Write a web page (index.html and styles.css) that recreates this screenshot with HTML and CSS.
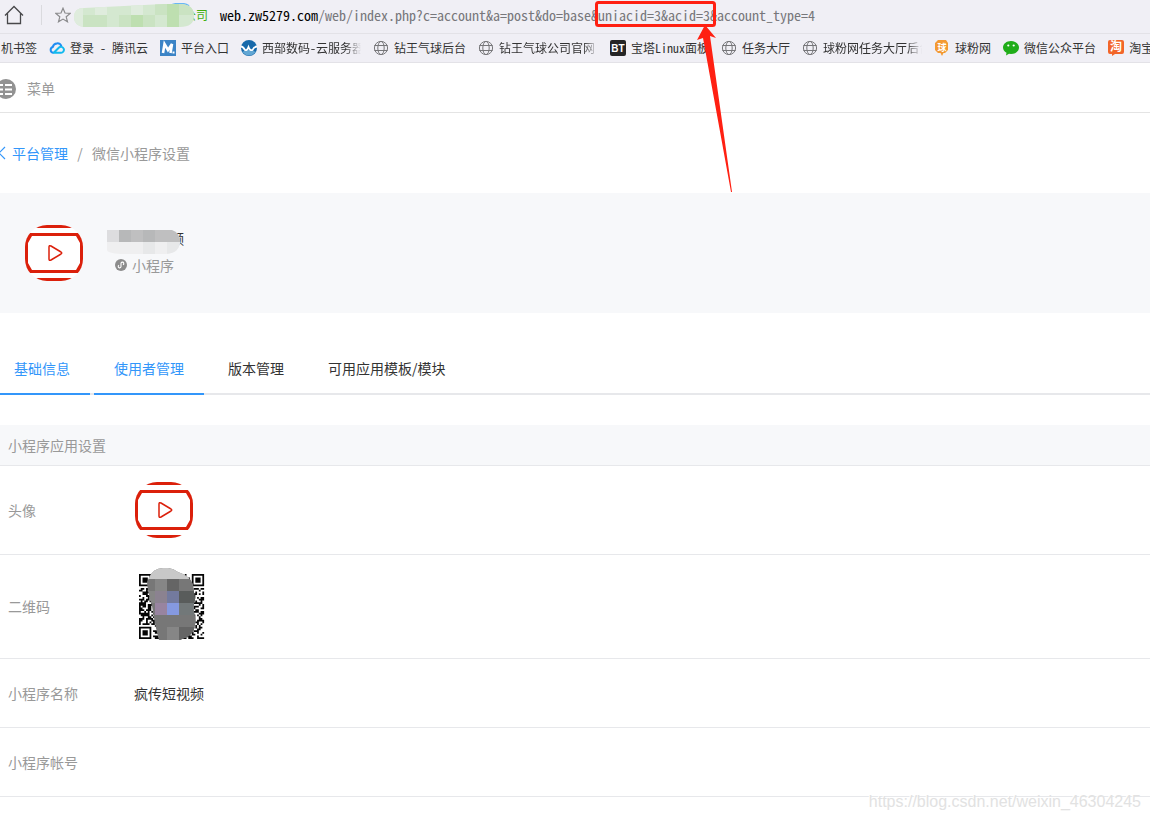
FILE: index.html
```html
<!DOCTYPE html>
<html lang="zh-CN">
<head>
<meta charset="utf-8">
<title>微信小程序设置</title>
<link rel="stylesheet" href="styles.css">
</head>
<body>
<svg class="defs" aria-hidden="true">
  <symbol id="globe" viewBox="0 0 16 16">
    <g fill="none" stroke="#77777a" stroke-width="1">
      <circle cx="8" cy="8" r="6.6"/><ellipse cx="8" cy="8" rx="3.2" ry="6.6"/>
      <path d="M1.400 5.500h13.200M1.400 10.500h13.200"/>
    </g>
  </symbol>
  <symbol id="logo" viewBox="0 0 58 56">
    <clipPath id="logo-clip"><rect width="58" height="56" rx="22"/></clipPath>
    <g clip-path="url(#logo-clip)">
      <path fill="#fff" d="M0 0h58v56H0z"/>
      <path fill="#db200b" d="M0 0h58v3H0zM0 53h58v3H0z"/>
      <path fill="#db200b" fill-rule="evenodd" d="M0 8h58v40H0zM7 11L3 18v20l4 7h44l4-7V18l-4-7z"/>
    </g>
    <path fill="none" stroke="#db200b" stroke-width="1.5" stroke-linejoin="round" d="M24 22q0-2 2-1l10 6q1.500 1 0 2l-10 6q-2 1-2-1z"/>
  </symbol>
</svg>

<header class="browser">
  <div class="address">
    <button class="icon-button home" aria-label="主页">
      <svg width="20" height="20" viewBox="0 0 20 20"><path fill="none" stroke="#48484a" stroke-width="1.300" d="M1 10.500L10 1.500l9 9M3.500 8.500v10h13v-10"/></svg>
    </button>
    <button class="icon-button star" aria-label="收藏">
      <svg width="16" height="16" viewBox="0 0 16 16"><path fill="none" stroke="#8a8a8c" stroke-width="1.200" d="M8 1.200l2 4.800 5.200.4-4 3.400 1.300 5L8 12.100l-4.500 2.700 1.300-5-4-3.400L6 6z"/></svg>
    </button>
    <div class="site">
      <span>公司</span>
      <svg class="site-cover" width="120" height="26" viewBox="0 0 120 26">
        <clipPath id="site-clip"><path d="M10 5Q50 3 90 1h18q12 1 12 12t-14 11H10Q0 23 0 14T10 5z"/></clipPath>
        <path d="M96 3q10-5 19 0" fill="none" stroke="#69b7f5" stroke-width="2"/>
        <g clip-path="url(#site-clip)">
          <path fill="#d4e8d0" d="M0 0h120v26H0z"/>
          <path fill="#dfecdd" d="M0 0h9v26H0zM21 0h12v12H21zM57 0h12v12H57z"/>
          <path fill="#cae3c2" d="M9 12h24v14H9zM45 12h12v14H45zM69 12h12v14H69zM81 0h12v12H81zM105 0h15v12h-15z"/>
          <path fill="#bedfb0" d="M57 12h12v14H57zM93 0h12v26H93z"/>
        </g>
      </svg>
    </div>
    <div class="url"><strong>web.zw5279.com</strong>/web/index.php?c=account&amp;a=post&amp;do=base&amp;uniacid=3&amp;acid=3&amp;account_type=4</div>
  </div>
  <nav class="bookmarks" aria-label="书签">
    <a href="#"><span>机书签</span></a>
    <a href="#"><svg viewBox="0 0 16 16"><path fill="none" stroke="#1f8df2" stroke-width="2" d="M4.500 12.800H4A3 3 0 0 1 3.800 7 4.500 4.500 0 0 1 12.500 6.500"/><path fill="none" stroke="#12b9ee" stroke-width="2" d="M4 12.800h8a3 3 0 1 0-2-5.300L5 12.500"/></svg><span>登录 - 腾讯云</span></a>
    <a href="#"><svg viewBox="0 0 16 16"><path fill="#3c84c6" d="M0 0h16v16H0z"/><path fill="none" stroke="#fff" stroke-width="2.600" d="M3 13L4.500 4 8 10l4-6-1.500 9"/><path fill="#fff" d="M12.500 11.500h2v2h-2z"/></svg><span>平台入口</span></a>
    <a href="#"><svg viewBox="0 0 16 16"><circle cx="8" cy="8" r="8" fill="#1769aa"/><path fill="#62a7d4" d="M1 12q7-4 14 0-7 7-14 0z"/><path fill="none" stroke="#fff" stroke-width="1.800" d="M0 6.500q2 0 4 3.500 2 1 3.500-3Q9 11 11.500 10 13 6.500 16 6.500"/></svg><span class="fade">西部数码-云服务器</span></a>
    <a href="#"><svg><use href="#globe"/></svg><span>钻王气球后台</span></a>
    <a href="#"><svg><use href="#globe"/></svg><span class="fade">钻王气球公司官网</span></a>
    <a href="#"><svg viewBox="0 0 16 16"><rect width="16" height="16" rx="2" fill="#252525"/><text x="8" y="12" class="bt">BT</text></svg><span>宝塔Linux面板</span></a>
    <a href="#"><svg><use href="#globe"/></svg><span>任务大厅</span></a>
    <a href="#"><svg><use href="#globe"/></svg><span class="fade">球粉网任务大厅后台</span></a>
    <a href="#"><svg viewBox="0 0 16 16"><path fill="#f39a32" d="M4 0h8l2 3v7l-3 3H9.500L8 16l-1.500-3H4l-3-3V3z"/><text x="8" y="11" class="tile">球</text></svg><span>球粉网</span></a>
    <a href="#"><svg viewBox="0 0 16 16"><path fill="#20ad19" d="M8 1c4.500 0 8 2.900 8 6.500S12.500 14 8 14l-2-.2L3 15.500l.5-2.700C1.300 11.600 0 9.700 0 7.500 0 3.900 3.500 1 8 1z"/><circle cx="5.300" cy="5.500" r="1.100" fill="#fff"/><circle cx="10.700" cy="5.500" r="1.100" fill="#fff"/></svg><span>微信公众平台</span></a>
    <a href="#"><svg viewBox="0 0 16 16"><path fill="#f26529" d="M2 0h12q2 0 2 2v10q0 2-2 2H7l-3 2v-2H2q-2 0-2-2V2q0-2 2-2z"/><text x="8" y="11" class="tile large">淘</text></svg><span>淘宝</span></a>
  </nav>
  <svg class="annotation" width="140" height="194" viewBox="0 0 140 194" aria-hidden="true">
    <rect x="6.500" y="2.500" width="118" height="23" rx="2" fill="none" stroke="#ff2012" stroke-width="3"/>
    <path fill="#ff2012" d="M115 25l-8 15 6-2 28 154h1L120 36l6 2z"/>
  </svg>
</header>

<div class="menu-bar">
  <button class="menu-button">
    <svg width="20" height="22" viewBox="0 0 20 22"><circle cx="10" cy="12" r="10" fill="#929292"/><path stroke="#fff" stroke-width="2" d="M4 8h3M9 8h7M4 12.500h3M9 12.500h7M4 17h3M9 17h7"/></svg>
    <span>菜单</span>
  </button>
</div>

<main>
  <nav class="breadcrumb" aria-label="路径">
    <a href="#"><svg width="8" height="14" viewBox="0 0 8 14"><path fill="none" stroke="#3296fa" stroke-width="1.200" d="M7 1L1 7l6 6"/></svg>平台管理</a>
    <span class="slash">/</span>
    <span>微信小程序设置</span>
  </nav>

  <section class="account">
    <svg class="logo"><use href="#logo"/></svg>
    <div class="account-text">
      <div class="account-name">
        <span>疯传短视频</span>
        <svg class="name-cover" width="73" height="24" viewBox="0 0 73 24">
          <clipPath id="name-clip"><path d="M0 0h65q8 3 8 11 0 12-14 13H14Q0 23 0 20z"/></clipPath>
          <g clip-path="url(#name-clip)">
            <path fill="#bfbfc0" d="M0 0h73v12H0z"/><path fill="#dddddf" d="M0 0h12v12H0z"/>
            <path fill="#b7b8b9" d="M12 0h12v12H12zM36 0h12v12H36z"/>
            <path fill="#efeff0" d="M0 12h73v12H0z"/><path fill="#e7e8e9" d="M36 12h12v12H36zM60 12h13v12H60z"/>
          </g>
        </svg>
      </div>
      <div class="account-type">
        <svg width="12" height="12" viewBox="0 0 12 12"><circle cx="6" cy="6" r="6" fill="#8c8c8c"/><path fill="none" stroke="#fff" stroke-width="1.100" d="M4 6.200a1.400 1.400 0 1 0 2 1.300v-3a1.400 1.400 0 1 1 2 1.300"/></svg>
        <span>小程序</span>
      </div>
    </div>
  </section>

  <nav class="tabs" aria-label="设置">
    <a href="#" class="active">基础信息</a>
    <a href="#" class="active">使用者管理</a>
    <a href="#">版本管理</a>
    <a href="#">可用应用模板/模块</a>
  </nav>

  <section class="settings">
    <h2>小程序应用设置</h2>
    <dl>
      <div class="row avatar"><dt>头像</dt><dd><svg class="logo"><use href="#logo"/></svg></dd></div>
      <div class="row code"><dt>二维码</dt><dd>
        <svg class="qr" width="66" height="72" viewBox="0 0 66 72" role="img" aria-label="二维码">
          <g transform="translate(0 6) scale(1.760)"><path id="qr-modules" fill="#050505"/></g>
          <clipPath id="qr-clip"><path d="M10 10Q14 0 24 0q8-1 15 4 12 4 15 12l2 16q-3 8 0 16 2 14-6 20l-9 4H20q-4-14-7-34Q8 20 8 14z"/></clipPath>
          <g clip-path="url(#qr-clip)">
            <path fill="#777" d="M0 0h66v72H0z"/>
            <path fill="#c8c8c8" d="M0 0h66v11H0z"/>
            <path fill="#868686" d="M16 11h12v12H16zM28 59h12v13H28zM4 23h12v12H4z"/>
            <path fill="#656565" d="M28 11h12v12H28zM40 59h26v13H40z"/>
            <path fill="#595c5b" d="M40 23h26v12H40z"/>
            <path fill="#8b8290" d="M16 23h12v12H16z"/>
            <path fill="#737a9e" d="M28 23h12v12H28z"/>
            <path fill="#9884a0" d="M16 35h12v12H16z"/>
            <path fill="#8599e0" d="M28 35h12v12H28z"/>
            <path fill="#727879" d="M40 35h26v12H40z"/>
          </g>
        </svg>
      </dd></div>
      <div class="row"><dt>小程序名称</dt><dd>疯传短视频</dd></div>
      <div class="row"><dt>小程序帐号</dt><dd></dd></div>
    </dl>
  </section>
</main>
<div class="watermark">https://blog.csdn.net/weixin_46304245</div>
<script src="qr.js"></script>
</body>
</html>
```
FILE: styles.css
```css
* { box-sizing: border-box; }

body {
  margin: 0;
  background: #fff;
  color: #333;
  font: 14px/20px "Noto Sans CJK SC", sans-serif;
  overflow-x: hidden;
}

a { color: inherit; text-decoration: none; }
button { border: 0; padding: 0; background: none; font: inherit; color: inherit; }
svg { display: block; flex: none; }
.defs { position: absolute; width: 0; height: 0; }

.browser {
  position: relative;
  background: #f0eff5;
  font-family: "Noto Sans Mono CJK SC", "Noto Sans CJK SC", monospace;
}

.address {
  display: flex;
  align-items: center;
  height: 34px;
  padding-bottom: 4px;
  border-bottom: 1px solid #e3e2e7;
}
.home { padding: 0 17px 0 4px; border-right: 1px solid #dadade; }
.star { padding-left: 13px; }

.site {
  position: relative;
  width: 149px;
  padding-right: 12px;
  color: #3fae0c;
  font-size: 12px;
  text-align: right;
}
.site-cover { position: absolute; top: -2px; left: 3px; }

.url { color: #77777b; white-space: nowrap; }
.url strong { color: #000; font-weight: 400; }

.bookmarks {
  display: flex;
  gap: 12px;
  height: 29px;
  padding-left: 1px;
  align-items: center;
  overflow: hidden;
  border-bottom: 1px solid #e3e2e7;
  font-size: 12px;
  color: #333;
}
.bookmarks a { display: flex; flex: none; align-items: center; gap: 5px; }
.bookmarks svg { width: 16px; height: 16px; }
.bookmarks span { white-space: pre; }
.bookmarks .fade {
  width: 99px;
  overflow: hidden;
  mask-image: linear-gradient(to right, #000 85%, transparent);
}
.bt { fill: #fff; font: 700 10px "Liberation Sans", sans-serif; text-anchor: middle; }
.tile { fill: #fff; font: 700 9px "Noto Sans CJK SC", sans-serif; text-anchor: middle; }
.tile.large { font-size: 12px; }

.annotation { position: absolute; top: 0; left: 590px; overflow: visible; }

.menu-bar {
  display: flex;
  align-items: center;
  height: 50px;
  border-bottom: 1px solid #e4e4e4;
  color: #999;
}
.menu-button { display: flex; align-items: center; gap: 11px; margin-left: -4px; }

.breadcrumb {
  display: flex;
  align-items: center;
  height: 80px;
  color: #999;
}
.breadcrumb a { display: flex; align-items: center; gap: 6px; margin-left: -2px; color: #3296fa; }
.slash { width: 24px; text-align: center; }

.account {
  display: flex;
  align-items: center;
  gap: 24px;
  height: 120px;
  padding-left: 25px;
  background: #f7f8fa;
}
.logo { width: 58px; height: 56px; }
.account-text { display: grid; gap: 7px; padding: 0 0 4px 7px; }
.account-name { position: relative; }
.name-cover { position: absolute; top: 2px; left: -7px; }
.account-type { display: flex; align-items: center; gap: 5px; padding-left: 1px; color: #999; }

.tabs {
  display: flex;
  gap: 4px;
  height: 82px;
  padding-top: 30px;
  margin-left: -6px;
  border-bottom: 2px solid #e7e8eb;
}
.tabs a { height: 52px; padding: 15px 20px; }
.tabs .active { color: #3296fa; border-bottom: 2px solid #3296fa; }

.settings { padding-top: 30px; }
.settings h2 {
  margin: 0;
  padding: 10px 8px;
  border-bottom: 1px solid #e7e8eb;
  background: #f7f8fa;
  color: #999;
  font-size: 14px;
  font-weight: 400;
}
.settings dl { margin: 0; }
.row {
  display: flex;
  align-items: center;
  min-height: 69px;
  padding: 16px 8px;
  border-bottom: 1px solid #e7e8eb;
}
.row dt { width: 126px; color: #999; }
.row dd { margin: 0; }
.avatar { min-height: 89px; }
.avatar dd { padding-left: 1px; }
.code { min-height: 104px; padding: 11px 8px 13px; }
.code dd { padding-left: 5px; padding-bottom: 4px; }

.watermark {
  position: absolute;
  right: 9px;
  bottom: 8px;
  color: #e2e2e2;
  font: 16px/20px "Liberation Sans", sans-serif;
  text-shadow: -1px -1px 0 #fff;
}
```
FILE: qr.js
```js
// Fills the QR picture: three finder squares and scattered data modules.
const size = 37;
const corners = [[0, 0], [size - 7, 0], [0, size - 7]];
let seed = 46304;
let d = "";

function inCorner(x, y) {
  return corners.some(([cx, cy]) => x >= cx - 1 && x <= cx + 7 && y >= cy - 1 && y <= cy + 7);
}

for (let y = 0; y < size; y++) {
  for (let x = 0; x < size; x++) {
    seed = (seed * 1103515245 + 12345) % 2147483648;
    if (!inCorner(x, y) && seed / 2147483648 < 0.5) d += `M${x} ${y}h1v1h-1z`;
  }
}
for (const [x, y] of corners) {
  d += `M${x} ${y}h7v7h-7zM${x + 1} ${y + 1}v5h5v-5zM${x + 2} ${y + 2}h3v3h-3z`;
}
document.getElementById("qr-modules").setAttribute("d", d);
```
